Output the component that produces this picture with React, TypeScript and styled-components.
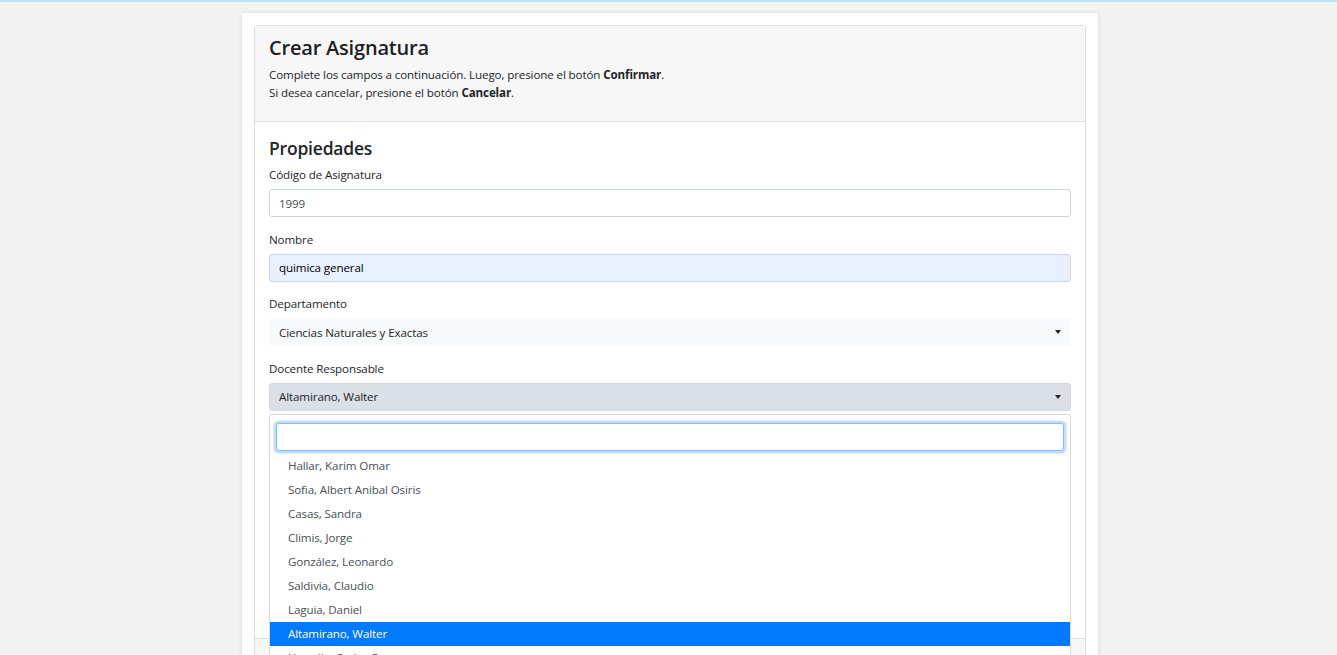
import styled, { createGlobalStyle } from 'styled-components';

const docentes = [
  'Hallar, Karim Omar',
  'Sofia, Albert Anibal Osiris',
  'Casas, Sandra',
  'Climis, Jorge',
  'González, Leonardo',
  'Saldivia, Claudio',
  'Laguia, Daniel',
  'Altamirano, Walter',
  'Heredia, Carlos E.',
  'Martínez, Lucía',
];

const selected = 'Altamirano, Walter';

const GlobalStyle = createGlobalStyle`
  html, body {
    margin: 0;
    padding: 0;
    overflow: hidden;
  }
  body {
    background: #f2f2f2;
    font-family: "Segoe UI", "Open Sans", "Noto Sans", sans-serif;
    font-size: 11.6px;
    letter-spacing: -0.12px;
    color: #212529;
  }
  * { box-sizing: border-box; }
`;

const TopLine = styled.div`
  height: 2px;
  background: #bfe6ef;
`;

const Page = styled.div`
  display: flex;
  justify-content: center;
  padding: 11px 0 0 3px;
`;

const Panel = styled.div`
  width: 856px;
  background: #fff;
  padding: 12px;
  box-shadow: 0 0 4px rgba(0, 0, 0, 0.12);
`;

const Card = styled.div`
  border: 1px solid #dcdcdc;
  border-radius: 3px;
  background: #fff;
`;

const CardHeader = styled.div`
  background: #f7f7f7;
  border-bottom: 1px solid #dcdcdc;
  padding: 9px 14px 19px;
`;

const Title = styled.h3`
  margin: 0 0 5px;
  font-size: 20px;
  font-weight: 600;
  line-height: 26px;
  letter-spacing: -0.2px;
  color: #1d2125;
`;

const Lead = styled.p`
  margin: 0;
  line-height: 18px;
`;

const CardBody = styled.div`
  padding: 13px 14px 14px;
`;

const SectionTitle = styled.h4`
  margin: 0 0 5px;
  font-size: 17.5px;
  font-weight: 600;
  line-height: 26px;
  letter-spacing: -0.2px;
`;

const Group = styled.div`
  margin-bottom: 13.6px;
  position: relative;
`;

const Label = styled.label`
  display: block;
  line-height: 18px;
  margin-bottom: 5px;
`;

const Input = styled.div<{ autofill?: boolean }>`
  height: 28px;
  display: flex;
  align-items: center;
  padding: 0 9px;
  border: 1px solid #ced4da;
  border-radius: 3px;
  background: ${p => (p.autofill ? '#e8f0fe' : '#fff')};
  color: ${p => (p.autofill ? '#000' : '#495057')};
`;

const TextArea = styled.div`
  height: 98px;
  border: 1px solid #ced4da;
  border-radius: 3px;
`;

const SelectButton = styled.div<{ active?: boolean }>`
  height: 28px;
  display: flex;
  align-items: center;
  justify-content: space-between;
  padding: 0 9px;
  border: 1px solid ${p => (p.active ? '#d3d9df' : '#f8f9fa')};
  border-radius: 3px;
  background: ${p => (p.active ? '#dae0e5' : '#f8f9fa')};
  color: #212529;
`;

const Caret = styled.span`
  width: 0;
  height: 0;
  border-top: 4px solid #212529;
  border-left: 3.5px solid transparent;
  border-right: 3.5px solid transparent;
`;

const Menu = styled.div`
  position: absolute;
  top: 54px;
  left: 0;
  right: 0;
  z-index: 10;
  background: #fff;
  border: 1px solid rgba(0, 0, 0, 0.15);
  border-radius: 3px;
  padding: 8px 0 0;
`;

const Search = styled.div`
  height: 28px;
  margin: 0 6px 3px;
  border: 1px solid #80bdff;
  border-radius: 3px;
  box-shadow: 0 0 0 2.5px rgba(0, 123, 255, 0.25);
  background: #fff;
`;

const Item = styled.div<{ active?: boolean }>`
  height: 24px;
  display: flex;
  align-items: center;
  padding: 0 18px;
  background: ${p => (p.active ? '#007bff' : 'transparent')};
  color: ${p => (p.active ? '#fff' : '#495057')};
  font-weight: ${p => (p.active ? 500 : 400)};
`;

const CardFooter = styled.div`
  height: 60px;
  background: #f7f7f7;
  border-top: 1px solid #dcdcdc;
`;

export default function App() {
  return (
    <>
      <GlobalStyle />
      <TopLine />
      <Page>
        <Panel>
          <Card>
            <CardHeader>
              <Title>Crear Asignatura</Title>
              <Lead>
                Complete los campos a continuación. Luego, presione el botón <b>Confirmar</b>.
              </Lead>
              <Lead>
                Si desea cancelar, presione el botón <b>Cancelar</b>.
              </Lead>
            </CardHeader>
            <CardBody>
              <SectionTitle>Propiedades</SectionTitle>
              <Group>
                <Label>Código de Asignatura</Label>
                <Input>1999</Input>
              </Group>
              <Group>
                <Label>Nombre</Label>
                <Input autofill>quimica general</Input>
              </Group>
              <Group>
                <Label>Departamento</Label>
                <SelectButton>
                  Ciencias Naturales y Exactas
                  <Caret />
                </SelectButton>
              </Group>
              <Group>
                <Label>Docente Responsable</Label>
                <SelectButton active>
                  {selected}
                  <Caret />
                </SelectButton>
                <Menu>
                  <Search />
                  {docentes.map(d => (
                    <Item key={d} active={d === selected}>
                      {d}
                    </Item>
                  ))}
                </Menu>
              </Group>
              <Group>
                <Label>Carrera</Label>
                <Input />
              </Group>
              <Group>
                <Label>Descripción</Label>
                <TextArea />
              </Group>
            </CardBody>
            <CardFooter />
          </Card>
        </Panel>
      </Page>
    </>
  );
}
